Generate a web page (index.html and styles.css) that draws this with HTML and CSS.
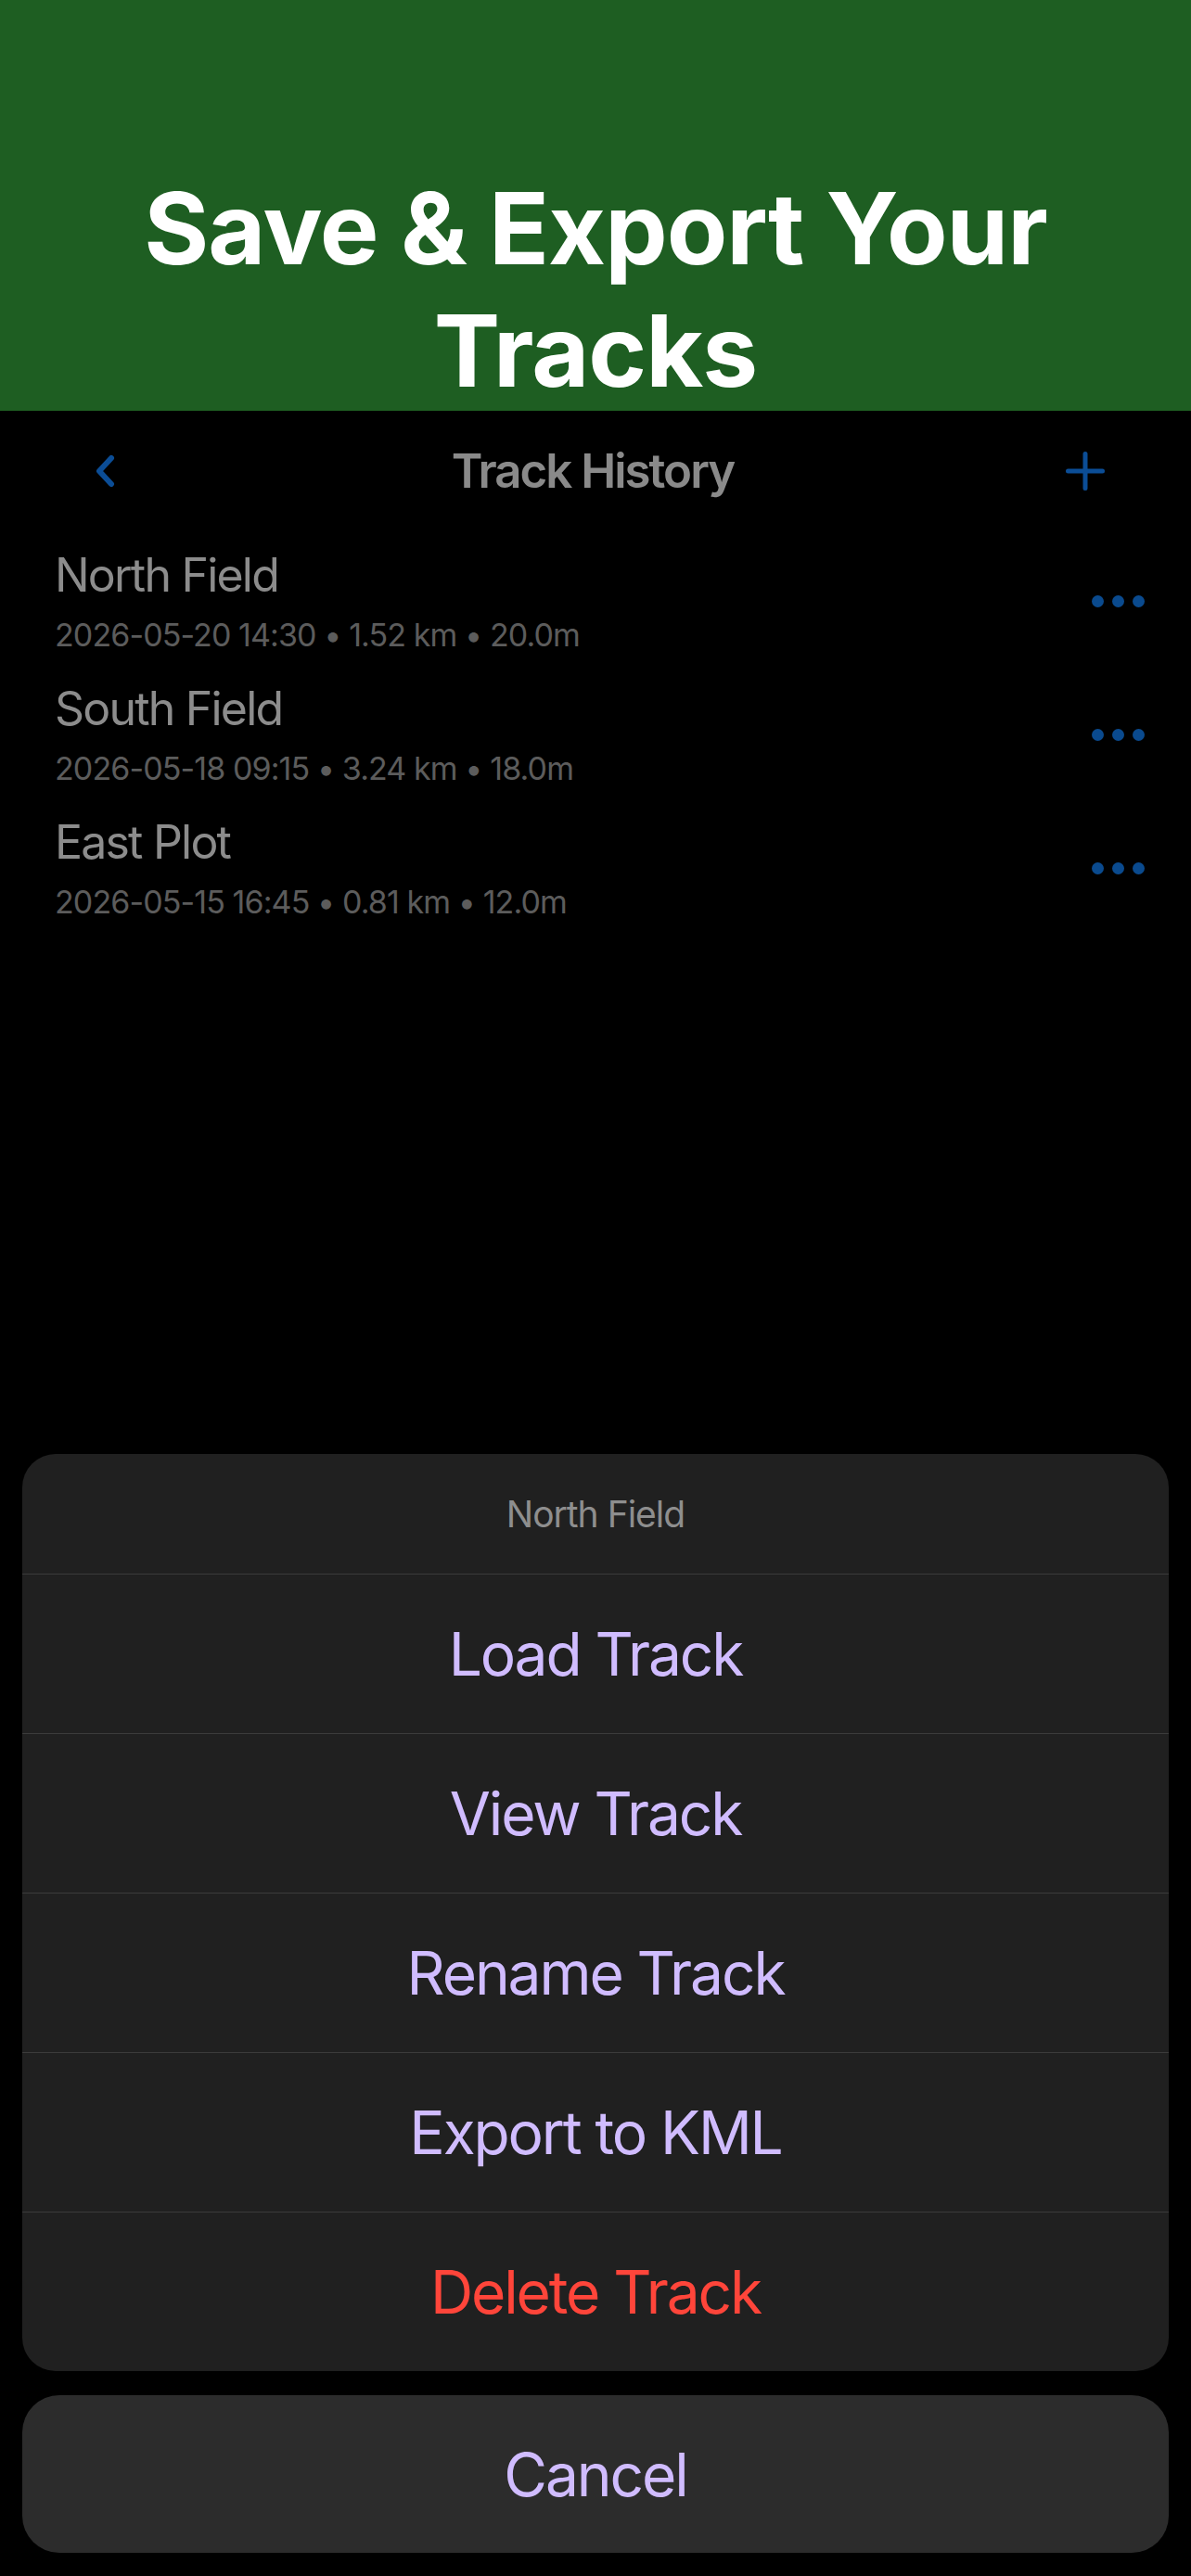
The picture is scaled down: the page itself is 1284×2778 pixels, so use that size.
FILE: index.html
```html
<!DOCTYPE html>
<html lang="en">

<head>
    <meta charset="UTF-8" />
    <meta name="viewport" content="width=device-width, initial-scale=1.0" />
    <title>Track History</title>
    <link rel="stylesheet" href="styles.css">
</head>

<body>
    <div class="app">
        <header class="hero">
            <h1>Save &amp; Export Your Tracks</h1>
        </header>

        <nav class="navbar">
            <svg class="nav-icon" width="32" height="48" viewBox="0 0 32 48">
                <path d="M20 10 L7 24 L20 38" fill="none" stroke="#0b4d96" stroke-width="6" stroke-linecap="round" stroke-linejoin="round" />
            </svg>
            <h2>Track History</h2>
            <svg class="nav-icon" width="48" height="48" viewBox="0 0 48 48">
                <path d="M24 5.5 V42.5 M5.5 24 H42.5" fill="none" stroke="#0b4d96" stroke-width="5" stroke-linecap="round" />
            </svg>
        </nav>

        <ul class="track-list">
            <li>
                <div class="info">
                    <div class="name">North Field</div>
                    <div class="meta">2026-05-20 14:30 • 1.52 km • 20.0m</div>
                </div>
                <div class="more"><span></span><span></span><span></span></div>
            </li>
            <li>
                <div class="info">
                    <div class="name">South Field</div>
                    <div class="meta">2026-05-18 09:15 • 3.24 km • 18.0m</div>
                </div>
                <div class="more"><span></span><span></span><span></span></div>
            </li>
            <li>
                <div class="info">
                    <div class="name">East Plot</div>
                    <div class="meta">2026-05-15 16:45 • 0.81 km • 12.0m</div>
                </div>
                <div class="more"><span></span><span></span><span></span></div>
            </li>
        </ul>

        <div class="sheet">
            <div class="sheet-title">North Field</div>
            <button class="sheet-action">Load Track</button>
            <button class="sheet-action">View Track</button>
            <button class="sheet-action">Rename Track</button>
            <button class="sheet-action">Export to KML</button>
            <button class="sheet-action danger">Delete Track</button>
        </div>

        <button class="cancel">Cancel</button>
    </div>
</body>

</html>
```

FILE: styles.css
```css
/* Base */
* {
    box-sizing: border-box;
    margin: 0;
    padding: 0;
}

body {
    font-family: 'Inter', 'Noto Sans', sans-serif;
    background-color: #000;
    color: #8c8c8c;
}

.app {
    width: 1284px;
    height: 2778px;
    display: flex;
    flex-direction: column;
    overflow: hidden;
}

/* Green banner */
.hero {
    height: 443px;
    flex-shrink: 0;
    background-color: #1e5e22;
    padding-top: 180px;
    overflow: hidden;
}

.hero h1 {
    color: #fff;
    font-size: 107px;
    line-height: 132px;
    font-weight: 700;
    text-align: center;
    letter-spacing: -1px;
    padding: 0 120px;
}

/* Navbar */
.navbar {
    height: 130px;
    flex-shrink: 0;
    display: flex;
    align-items: center;
    justify-content: space-between;
    padding: 0 90px 0 100px;
}

.navbar h2 {
    font-size: 51px;
    line-height: 62px;
    font-weight: 600;
    color: #8a8a8a;
    letter-spacing: -2px;
}

.nav-icon {
    display: block;
}

/* Track list */
.track-list {
    list-style: none;
    padding-top: 5px;
}

.track-list li {
    display: flex;
    align-items: center;
    justify-content: space-between;
    padding: 12px 50px 15px 59px;
}

.track-list .name {
    font-size: 50px;
    line-height: 60px;
    color: #8c8c8c;
    letter-spacing: -1.8px;
}

.track-list .meta {
    margin-top: 13px;
    font-size: 34px;
    line-height: 44px;
    color: #5c5c5c;
    letter-spacing: -0.9px;
}

.more {
    display: flex;
    gap: 9px;
}

.more span {
    width: 13px;
    height: 13px;
    border-radius: 50%;
    background-color: #0a4a8e;
}

/* Action sheet */
.sheet {
    margin: auto 24px 0;
    background-color: #202020;
    border-radius: 36px;
    overflow: hidden;
    display: flex;
    flex-direction: column;
}

.sheet-title {
    height: 129px;
    display: flex;
    align-items: center;
    justify-content: center;
    font-size: 39px;
    color: #8e8e8e;
    letter-spacing: -1px;
}

.sheet-action,
.cancel {
    font-family: inherit;
    border: none;
    background: none;
    color: #d0bcff;
    font-size: 64px;
    letter-spacing: -2.1px;
    cursor: pointer;
}

.sheet-action {
    height: 172px;
    border-top: 1px solid #3b3b3b;
}

.sheet-action.danger {
    color: #ff453a;
}

.cancel {
    margin: 26px 24px 25px;
    height: 170px;
    flex-shrink: 0;
    border-radius: 40px;
    background-color: #2c2c2c;
}
```
